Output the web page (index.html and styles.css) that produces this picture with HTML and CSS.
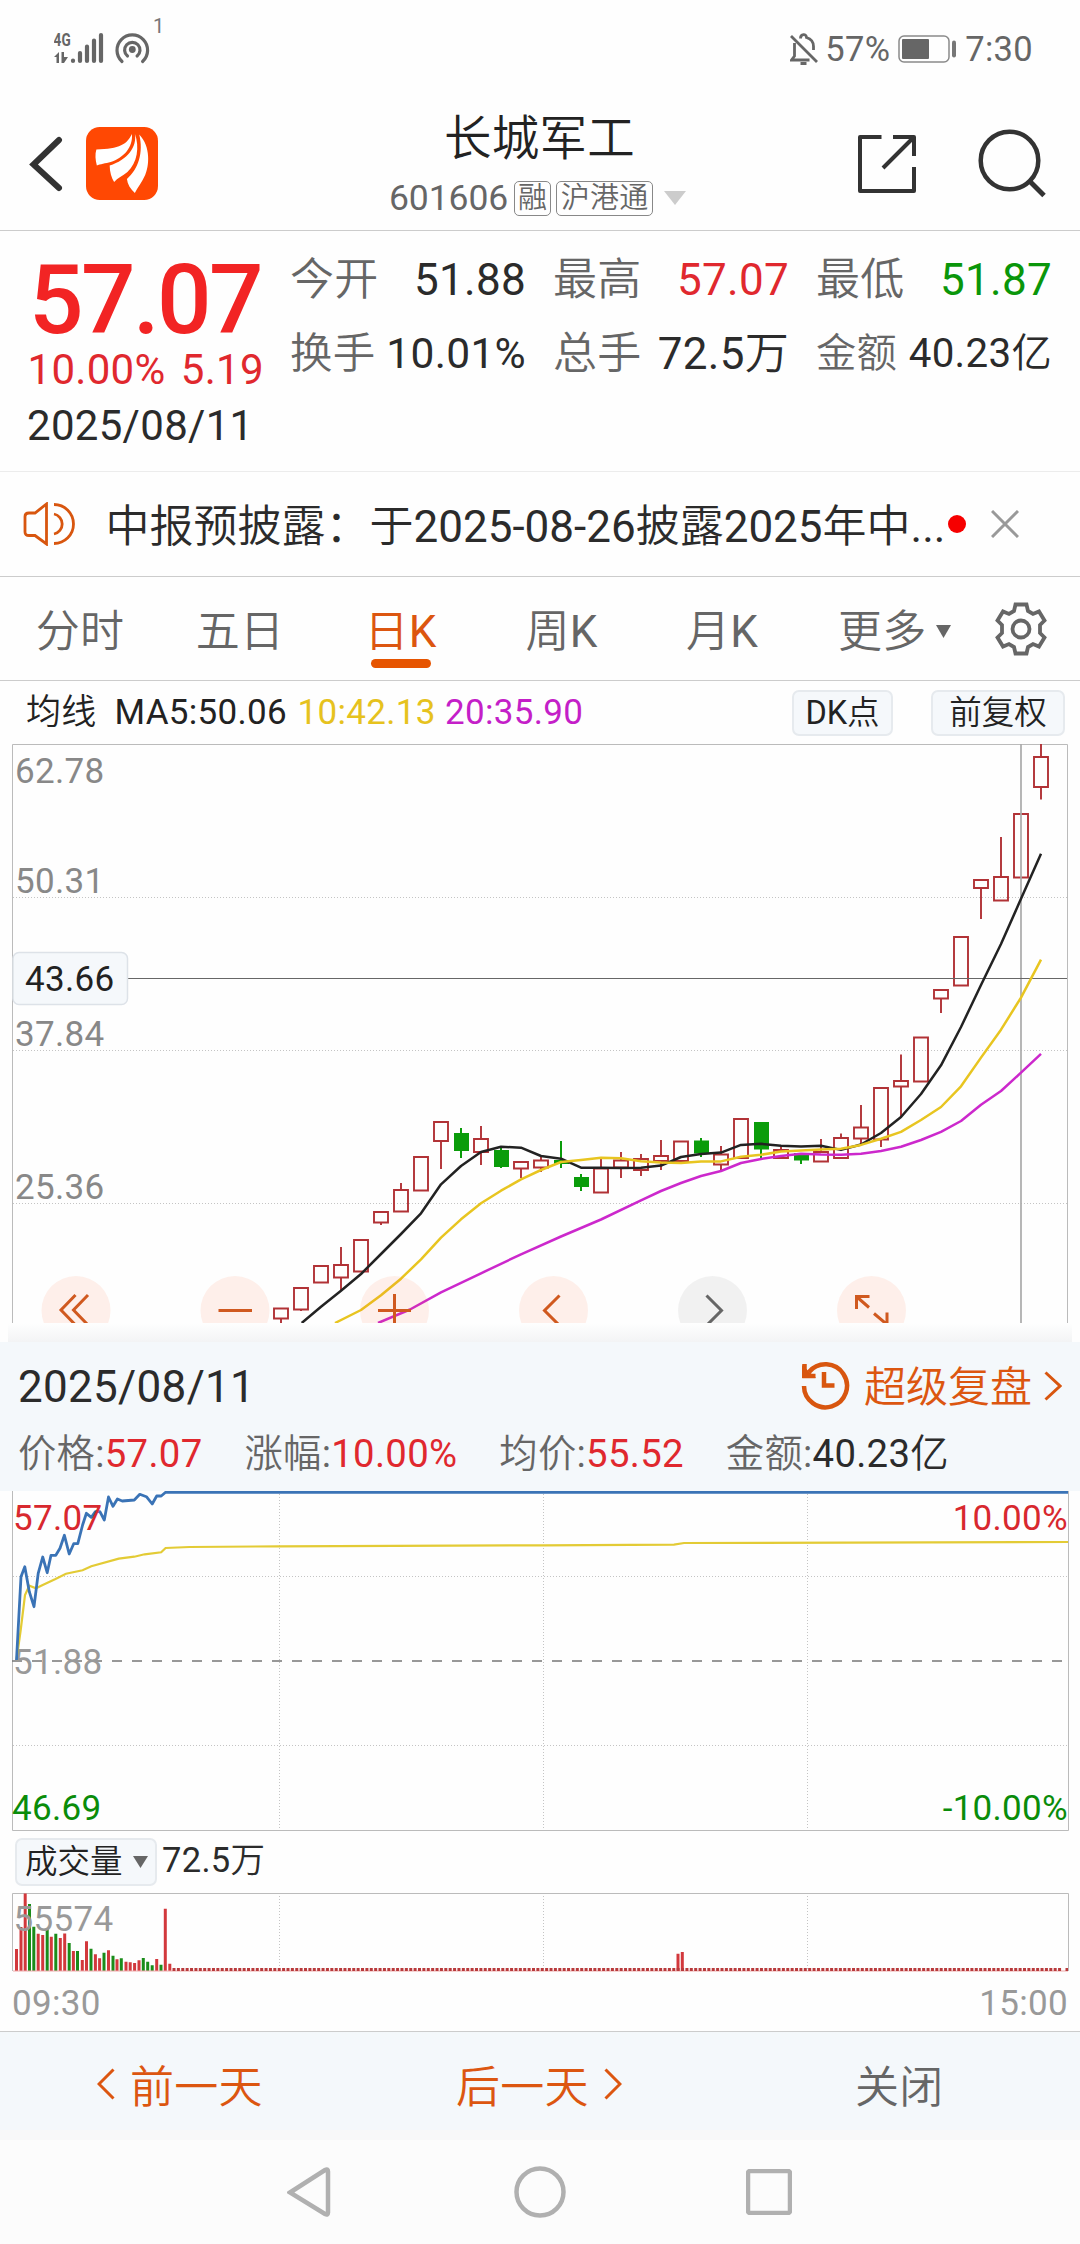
FILE: index.html
```html
<!DOCTYPE html>
<html lang="zh-CN">
<head>
<meta charset="utf-8">
<title>长城军工 601606</title>
<link rel="stylesheet" href="styles.css">
</head>
<body>
<div class="status">
  <svg class="status-signal" width="120" height="60" viewBox="54 8 120 60">
    <text class="net" x="53.5" y="46" textLength="17.5" lengthAdjust="spacingAndGlyphs">4G</text>
    <path class="sig-fill" d="M54 57l5-5v11h-2.500V57zM61.500 52h2.500v5l4 0l-4 6h-2.500z"/>
    <path class="sig-bars" d="M73 60.500v.5M80 53v8M87 46.500v14.500M94 40.500v20.500M101 35v26"/>
    <circle cx="132.300" cy="49.500" r="3.400" class="sig-fill"/>
    <path class="sig-arc" d="M127.500 56a7.700 7.700 0 1 1 9.600 0M122 61.500a15.300 15.300 0 1 1 20.600 0"/>
    <text class="hot" x="153" y="33">1</text>
  </svg>
  <div class="status-right">
    <svg class="bell" width="28" height="32" viewBox="0 0 28 32">
      <path d="M1 3L27 29M4.500 10v13l-3 4h18M10.500 5.500c0-5 6-5 6-1c5 1.500 7 4 7 9v3.500M10.500 30.500h6"/>
    </svg>
    <span class="pct">57%</span>
    <svg class="battery" width="58" height="28" viewBox="0 0 58 28">
      <rect x="1" y="1" width="50" height="26" rx="5" fill="none" stroke="#8a8a8a" stroke-width="1.500"/>
      <rect x="4" y="4" width="27" height="20" rx="1" fill="#666"/>
      <rect x="54" y="5.500" width="4" height="17" rx="2" fill="#777"/>
    </svg>
    <span class="clock">7:30</span>
  </div>
</div>

<header class="header">
  <div class="header-left">
    <svg class="back" width="34" height="56" viewBox="0 0 34 56"><path d="M30 4L4.500 28.500L30 52"/></svg>
    <svg class="logo" width="72" height="73" viewBox="0 0 73 73" preserveAspectRatio="none">
      <rect width="73" height="73" rx="14" fill="#ff4803"/>
      <path fill="#fff" d="M46.500 7C42 17 34 22 10.500 22.500C9 27 9.500 33 11 38.500C14 37 20 36.500 25 35C38 31 48 20 46.500 7z"/>
      <path fill="#fff" d="M49.500 6.500C52 20 42 33 24 38.500C24 45 26 51 28.500 55C32 51 37 49 42 45C52 36 54.500 20 49.500 6.500z"/>
      <path fill="#fff" d="M54 7.500C66 20 64 39 60 48C57 55 52 61 49.500 66C45 62 42 57 41.500 52C53 42 58.500 26 54 7.500z"/>
    </svg>
  </div>
  <div class="header-mid">
    <h1>长城军工</h1>
    <div class="code-row">
      <span class="code">601606</span><span class="badge b1">融</span><span class="badge b2">沪港通</span>
      <svg class="caret" width="22" height="14" viewBox="0 0 22 14"><path d="M0 0H22L11 14z" fill="#ccc"/></svg>
    </div>
  </div>
  <div class="header-right">
    <svg width="58" height="58" viewBox="0 0 58 58"><path fill="none" stroke="#333" stroke-width="4" stroke-linejoin="round" d="M23.500 2H2V56H56V32M35 2H56V21M55 3L25 33"/></svg>
    <svg width="70" height="70" viewBox="0 0 70 70"><circle cx="32.500" cy="31.500" r="28.800" fill="none" stroke="#333" stroke-width="4.500"/><path d="M52.500 52L67 66.500" stroke="#333" stroke-width="5"/></svg>
  </div>
</header>

<section class="quote">
  <div class="quote-main">
    <div class="price">57.07</div>
    <div class="change">10.00% 5.19</div>
    <div class="date">2025/08/11</div>
  </div>
  <dl class="stats">
    <div class="s44"><dt>今开</dt><dd>51.88</dd></div>
    <div class="s44"><dt>最高</dt><dd class="up">57.07</dd></div>
    <div class="s44"><dt>最低</dt><dd class="down">51.87</dd></div>
    <div class="s42"><dt>换手</dt><dd>10.01%</dd></div>
    <div class="s44"><dt>总手</dt><dd>72.5万</dd></div>
    <div class="s40"><dt>金额</dt><dd>40.23亿</dd></div>
  </dl>
</section>

<section class="notice">
  <svg class="speaker" width="52" height="44" viewBox="0 0 52 44"><path d="M2 14.500Q2 11 6 11H12L23.500 2V42L12 33.500H6Q2 33.500 2 30zM31 2.500A19.500 19.500 0 0 1 31 41.500M31 12A10.200 10.200 0 0 1 31 32"/></svg>
  <p>中报预披露：于2025-08-26披露2025年中...</p>
  <i class="dot"></i>
  <svg class="close" width="28" height="28" viewBox="0 0 28 28"><path d="M1 1L27 27M27 1L1 27"/></svg>
</section>

<nav class="tabs">
  <span>分时</span><span>五日</span><span class="on">日K</span><span>周K</span><span>月K</span>
  <span class="more">更多<svg width="15" height="13" viewBox="0 0 15 13"><path d="M0 0H15L7.500 13z" fill="#666"/></svg></span>
  <svg class="gear" width="52" height="54" viewBox="-26 -27 52 54">
    <path d="M-5.500 -24.500H5.500L7 -18L12 -15L18 -17.500L23.500 -8.500L19 -4V4L23.500 8.500L18 17.500L12 15L7 18L5.500 24.500H-5.500L-7 18L-12 15L-18 17.500L-23.500 8.500L-19 4V-4L-23.500 -8.500L-18 -17.500L-12 -15L-7 -18z"/><circle r="8.500"/>
  </svg>
</nav>

<div class="ma-row">
  <span class="ma-name">均线</span><span class="ma5">MA5:50.06</span><span class="ma10">10:42.13</span><span class="ma20">20:35.90</span>
  <button class="chip dk">DK点</button><button class="chip fq">前复权</button>
</div>

<svg class="kline" width="1080" height="579" viewBox="0 744 1080 579">
  <path class="dots" d="M13 897.500H1067M13 1050.500H1067M13 1203.500H1067"/>
  <path class="frame" d="M12.500 1323V744.500H1067.500V1323"/>
  <g class="axis">
    <text x="15" y="782.700">62.78</text><text x="15" y="892.700">50.31</text><text x="15" y="1045.500">37.84</text><text x="15" y="1198.500">25.36</text>
  </g>
  <!-- rising candles: hollow bodies and wicks -->
  <path class="k-up" d="M274 1308.500h14v10h-14zM281 1318.500v6M294 1288h14v21.500h-14zM301 1309v2M314 1266h14v16.500h-14zM334 1265h14v12.500h-14zM341 1247v18M341 1277.500v13M354 1240h14v31.500h-14zM374 1212h14v10.500h-14zM381 1222v3M394 1190h14v21.500h-14zM401 1183v7M414 1157h14v33.500h-14zM434 1122h14v19h-14zM441 1141v28M474 1139h14v13h-14zM481 1126v13M481 1152v13M514 1162h14v6.500h-14zM521 1168v10M534 1160.500h14v7h-14zM541 1157v3M541 1167v5M594 1168.500h14v24h-14zM601 1158.500v10M614 1160.500h14v7h-14zM621 1152v8M621 1168v10M634 1159h14v11h-14zM641 1154v5M641 1170v6M654 1156h14v5h-14zM661 1140v16M661 1161v9M674 1141.500h14v19.500h-14zM714 1154.500h14v10h-14zM721 1146v8M721 1164.500v6M734 1119h14v39h-14zM774 1150h14v8h-14zM781 1147v3M814 1152h14v9.500h-14zM821 1139v13M834 1138h14v20h-14zM841 1133.500v4M854 1127.500h14v11h-14zM861 1105v22M861 1138.500v5.500M874 1088h14v51.500h-14zM881 1139.500v7.500M894 1081h14v5.500h-14zM901 1054.500v26.500M901 1086.500v31M914 1037.500h14v44h-14zM934 990h14v8.500h-14zM941 998.500v14.500M954 937h14v48.500h-14zM974 880h14v8h-14zM981 888v31M994 877h14v23.500h-14zM1001 837v40M1014 814h14v63.500h-14zM1034 757h14v30h-14zM1041 744v13M1041 787v12.500"/>
  <!-- falling candles -->
  <path class="k-down" d="M454 1133h15v18h-15zM460 1128h2v30h-2zM494 1150h15v17h-15zM500 1148h2v20h-2zM554 1160h15v4h-15zM560 1141h2v27h-2zM574 1177h15v10h-15zM580 1174h2v17h-2zM694 1140.500h15v13h-15zM700 1138h2v19h-2zM754 1122h15v27.500h-15zM760 1149h2v9h-2zM794 1153h15v7.500h-15zM800 1160h2v4h-2z"/>
  <path class="cross-v" d="M1021 744V1323"/><path class="cross-h" d="M128 978.500H1067"/>
  <polyline class="line l20" points="378,1323 410,1309.500 441,1292.300 481,1273.300 521,1254.300 561,1236.500 601,1219.500 641,1200.400 661,1191 681,1183 701,1176 721,1171 741,1163 761,1159 781,1156 801,1153.700 821,1154.500 841,1154.800 861,1153.700 881,1151 901,1146.800 921,1140 941,1131.900 961,1121 981,1104.700 1001,1091 1021,1072.600 1041,1053.800"/>
  <polyline class="line l5" points="301.700,1323 321,1306.700 341,1290.700 361,1274 381,1254 401,1234 421,1213.300 441,1184.300 461,1166 481,1152 501,1146.700 521,1147.700 541,1156 561,1158.700 581,1167.700 601,1167.700 621,1168 641,1167.800 661,1165.600 681,1157 701,1154 721,1152.600 741,1144.900 761,1143.800 781,1145.700 801,1146.400 821,1145.700 841,1149.900 861,1144.500 881,1133 901,1117 921,1094 941,1065.300 961,1027 981,985 1001,944 1021,898.800 1041,853.700"/>
  <polyline class="line l10" points="335,1323 361,1310 381,1295.300 401,1278.700 421,1259.300 441,1237.700 461,1219.300 481,1203.300 501,1190.700 521,1179.300 541,1170 561,1162 581,1160 601,1157.700 621,1158.300 641,1161.300 661,1162.500 681,1162.900 701,1161.400 721,1161.400 741,1156.800 761,1154.800 781,1151.400 801,1150.600 821,1149.500 841,1148.700 861,1144.900 881,1138.800 901,1131.900 921,1120 941,1107 961,1086.300 981,1057.600 1001,1029.700 1021,997.600 1041,959.700"/>
  <rect class="tag" x="13" y="952.500" width="114.500" height="52" rx="6"/><text class="tag-text" x="25" y="990.700">43.66</text>
  <g class="pads"><circle cx="76" cy="1310.500" r="34.500"/><circle cx="235" cy="1310.500" r="34.500"/><circle cx="394.500" cy="1310.500" r="34.500"/><circle cx="553.500" cy="1310.500" r="34.500"/><circle class="off" cx="712.500" cy="1310.500" r="34.500"/><circle cx="871.500" cy="1310.500" r="34.500"/></g>
  <path class="pad-ico" d="M75.500 1295L61 1310L75.500 1325M88 1295L73.500 1310L88 1325M218.500 1310.500H252M378 1310.500H411M394.500 1294V1327M559.500 1295.500L544.500 1310.500L559.500 1325.500M869.500 1296.500H856.500V1309M857 1297L869 1307.500M874 1313.500L887 1324.500M887 1312.500V1325H875"/>
  <path class="pad-ico off" d="M706.500 1295.500L721.500 1310.500L706.500 1325.500"/>
</svg>
<div class="fade"></div>

<section class="day">
  <div class="day-head">
    <span class="day-date">2025/08/11</span>
    <a class="replay">
      <svg width="50" height="50" viewBox="0 0 50 50"><path fill="none" stroke="#d8560f" stroke-width="4.500" d="M4 25A21.500 21.500 0 1 0 9 11M4.500 3V15H15.500M24 11V24.500H34.500"/><path fill="#d8560f" d="M2 4V17H16z"/></svg>
      <span>超级复盘</span>
      <svg width="18" height="30" viewBox="0 0 18 30"><path fill="none" stroke="#d8560f" stroke-width="3" d="M1.500 1.500L16 15L1.500 28.500"/></svg>
    </a>
  </div>
  <div class="day-info">
    <span>价格:<b class="up">57.07</b></span><span>涨幅:<b class="up">10.00%</b></span><span>均价:<b class="up">55.52</b></span><span>金额:<b>40.23亿</b></span>
  </div>
</section>

<svg class="minute" width="1080" height="340" viewBox="0 1491 1080 340">
  <path class="dots" d="M13 1576.500H1067M13 1745.500H1067M279.500 1491V1830M543.500 1491V1830M807.500 1491V1830"/>
  <path class="frame" d="M12.500 1491V1830.500H1068.500V1491"/>
  <path class="mid" d="M12 1661H1067"/>
  <g class="axis">
    <text x="13" y="1674.300" class="dim">51.88</text>
    <text x="12" y="1819.700" class="g">46.69</text><text x="1068" y="1819.700" class="g end">-10.00%</text>
  </g>
  <polyline class="avg" points="16.500,1660 20.700,1630 25,1595 29.300,1585.700 36,1588.300 42.700,1585 55,1579.300 66,1573.700 82.600,1570.300 91.300,1566.300 118.800,1558.700 134.300,1556.700 144.600,1554.300 161.200,1552.300 165.600,1548 189.400,1547 279,1546.300 543,1545.300 674,1544.700 684,1543 1068,1542"/>
  <polyline class="now" points="16.500,1660 21,1576.700 24.800,1566.700 29.300,1591.700 34,1606.700 38.200,1573.300 42.700,1557 47.200,1572.700 51,1555.300 55.800,1555.300 60,1548.300 64.400,1535.300 69.200,1554 73.700,1543.700 77.800,1543.700 82.600,1525 86.400,1513.300 91.300,1517.300 95.400,1511.700 99.900,1511.700 104.300,1520 108.500,1497 113,1506.300 117.400,1499 122.200,1501 134.300,1500 139.800,1494.300 146.400,1496.700 152.200,1504 156.700,1496 161.200,1496 165.600,1492.300 1068,1492.300"/>
  <g class="axis"><text x="13" y="1529.700" class="r">57.07</text><text x="1068" y="1529.700" class="r end">10.00%</text></g>
</svg>

<div class="vol-row">
  <button class="chip vol">成交量<svg width="15" height="12" viewBox="0 0 15 12"><path d="M0 0H15L7.500 12z" fill="#666"/></svg></button>
  <span>72.5万</span>
</div>

<svg class="volume" width="1080" height="79" viewBox="0 1893 1080 79">
  <path class="dots" d="M279.500 1893V1971M543.500 1893V1971M807.500 1893V1971"/>
  <path class="frame" d="M12.500 1971V1893.500H1068.500V1971"/>
  <path class="v-up" d="M16.500 1971V1949M21 1971V1927M25.200 1971V1893.500M38.200 1971V1933.700M42.700 1971V1935M51.300 1971V1936.700M60.300 1971V1938M64.700 1971V1933.500M73.400 1971V1951M82.300 1971V1960M86.500 1971V1941.300M95.400 1971V1954.300M99.600 1971V1958.300M108.500 1971V1950.300M117 1971V1959.300M126 1971V1961.700M130.200 1971V1962.300M134.600 1971V1963M139 1971V1960.300M156.700 1971V1959M165.300 1971V1908.700M169.800 1971V1963.700M678 1971V1953.700M682.300 1971V1952"/>
  <path class="v-down" d="M29.500 1971V1904M33.800 1971V1926.700M47.200 1971V1929M55.800 1971V1933.700M69.200 1971V1943M77.500 1971V1951M91 1971V1948.700M104 1971V1952.700M113 1971V1955.700M121.300 1971V1958.300M143.300 1971V1958M147.700 1971V1961.700M152.200 1971V1965.300M161 1971V1964.700"/>
  <path class="v-base" d="M13 1971H1068"/>
  <path class="v-flat" d="M172.500 1969.500H1062"/><path class="v-flat" d="M1065.500 1969.500H1068"/>
  <text x="13.500" y="1930.700" class="vol-max">55574</text>
</svg>
<div class="time-row"><span>09:30</span><span>15:00</span></div>

<div class="actions">
  <a class="a1"><svg width="18" height="32" viewBox="0 0 18 32"><path d="M16.500 1.500L2 16L16.500 30.500"/></svg>前一天</a>
  <a class="a2">后一天<svg width="18" height="32" viewBox="0 0 18 32"><path d="M1.500 1.500L16 16L1.500 30.500"/></svg></a>
  <a class="a3">关闭</a>
</div>
<div class="sysnav">
  <svg width="44" height="52" viewBox="0 0 44 52"><path d="M3 26.500L38 4Q41 2.500 41 5.500V46.500Q41 49.500 38 48z"/></svg>
  <svg width="52" height="52" viewBox="0 0 52 52"><circle cx="26" cy="26" r="23.500"/></svg>
  <svg width="46" height="46" viewBox="0 0 46 46"><rect x="2" y="2" width="42" height="42" rx="2"/></svg>
</div>
</body>
</html>
```
FILE: styles.css
```css
* { box-sizing: border-box; }
body { margin: 0; width: 1080px; height: 2244px; overflow: hidden; background: #fefefe; color: #2b2b2b; font-family: Roboto, "Noto Sans CJK SC DemiLight", "Noto Sans CJK SC Light", "Noto Sans CJK SC", sans-serif; font-weight: 400; letter-spacing: .3px; }
svg { display: block; flex: none; }
h1, p, dl, dd, dt { margin: 0; font-weight: 400; }
button { font-family: inherit; margin: 0; padding: 0; }
b { font-weight: 400; color: #2b2b2b; }
.up, b.up { color: #e0282e; }
.down { color: #0a960a; }

.status { height: 98px; display: flex; justify-content: space-between; padding: 0 47px 0 54px; color: #666; }
.status-signal { margin-top: 8px; }
.net { font: 700 17.500px Roboto, sans-serif; fill: #666; }
.hot { font: 400 20px Roboto, sans-serif; fill: #777; }
.sig-fill { fill: #666; }
.sig-bars { stroke: #666; stroke-width: 4.200; stroke-linecap: round; }
.sig-arc { fill: none; stroke: #666; stroke-width: 3.200; stroke-linecap: round; }
.status-right { display: flex; align-items: center; font-size: 34.500px; line-height: 40px; }
.bell path { fill: none; stroke: #666; stroke-width: 2.800; }
.pct { margin-left: 7px; }
.battery { margin-left: 8px; }
.clock { margin-left: 9px; }

.header { height: 133px; border-bottom: 1px solid #ccc; display: grid; grid-template-columns: 389px 298px 1fr; }
.header-left { display: flex; align-items: center; height: 131px; padding-left: 29px; gap: 22.500px; }
.back path { fill: none; stroke: #333; stroke-width: 6; stroke-linecap: round; }
.header-mid { padding-top: 13px; }
h1 { font-size: 47.500px; line-height: 56px; text-align: center; color: #222; padding-left: 3px; }
.code-row { display: flex; align-items: center; height: 36px; margin-top: 13px; color: #666; }
.code { font-size: 35.500px; line-height: 36px; letter-spacing: -.1px; }
.badge { height: 35px; border: 1px solid #888; border-radius: 5px; font-size: 29px; line-height: 33px; text-align: center; }
.b1 { width: 37px; margin-left: 6px; }
.b2 { width: 97px; margin-left: 5px; }
.caret { margin-left: 11px; }
.header-right { display: flex; align-items: center; height: 131px; padding-left: 171px; gap: 61px; }

.quote { height: 241px; border-bottom: 1px solid #ececec; display: grid; grid-template-columns: 290px 764px; }
.quote-main { padding: 29px 0 0 27px; }
.price { font-size: 96px; line-height: 80px; font-weight: 500; color: #f22424; letter-spacing: -2.600px; padding-left: 2px; }
.change { font-size: 42px; line-height: 44px; margin-top: 7.500px; color: #e0282e; word-spacing: 4.500px; padding-left: .500px; }
.date { font-size: 42px; line-height: 44px; margin-top: 12px; color: #2b2b2b; }
.stats { display: grid; grid-template-columns: repeat(3, 236px); column-gap: 27px; grid-auto-rows: 73.500px; padding-top: 19px; line-height: 60px; }
.stats div { display: flex; justify-content: space-between; align-items: baseline; white-space: nowrap; }
.stats dt { color: #666; }
.s44 { font-size: 44px; }
.s42 { font-size: 42.500px; }
.s40 { font-size: 40.300px; }

.notice { height: 105px; border-bottom: 1px solid #ccc; display: flex; align-items: center; padding-left: 22.500px; }
.speaker path { fill: none; stroke: #d8560f; stroke-width: 2.800; }
.notice p { width: 838px; margin-left: 31px; padding-top: 5px; font-size: 44px; line-height: 60px; white-space: nowrap; letter-spacing: 0; }
.dot { width: 18px; height: 18px; border-radius: 9px; background: #f60000; margin-left: 4.500px; }
.close { margin-left: 25px; }
.close path { stroke: #999; stroke-width: 3; }

.tabs { height: 104px; border-bottom: 1px solid #ccc; display: grid; grid-template-columns: 160px 160px 161px 161px 160px 193px 52px; align-items: center; font-size: 44px; line-height: 60px; color: #666; padding-top: 6px; }
.tabs span { text-align: center; }
.tabs .on { color: #dc5610; position: relative; }
.tabs .on::after { content: ""; position: absolute; left: 51px; top: 57px; width: 60px; height: 9px; border-radius: 5px; background: #e65400; }
.tabs .more { display: flex; align-items: center; gap: 9px; padding-left: 36px; }
.gear { margin-top: -6px; }
.gear path, .gear circle { fill: none; stroke: #666; stroke-width: 3.800; }

.ma-row { height: 63px; display: flex; align-items: center; padding-left: 26px; font-size: 35px; line-height: 46px; white-space: nowrap; color: #222; }
.ma-row span { padding-top: 1px; }
.ma-name { width: 88.500px; }
.ma5 { width: 183px; }
.ma10 { width: 147.500px; color: #e6c21e; }
.ma20 { width: 347px; color: #c41fc8; }
.chip { height: 46px; border: 2px solid #e6eaee; border-radius: 7px; background: #f5f8fb; color: #222; font-size: 32.500px; line-height: 42px; }
.dk { width: 101px; }
.fq { width: 134px; margin-left: 38px; }

.dots { fill: none; stroke: #c4c4c4; stroke-width: 1; stroke-dasharray: 1 2; }
.frame { fill: none; stroke: #bbb; stroke-width: 1; }
.axis text, .vol-max { font-size: 35px; fill: #888; }
.axis .dim { fill: #999; }
.axis .g { fill: #0a8c0a; }
.axis .r { fill: #d8282e; }
.end { text-anchor: end; }
.k-up { fill: none; stroke: #b13236; stroke-width: 1.900; }
.k-down { fill: #0a9c0a; }
.cross-v { stroke: #aaa; stroke-width: 1.700; }
.cross-h { stroke: #666; stroke-width: 1.200; }
.line { fill: none; stroke-width: 2.500; stroke-linejoin: round; }
.l5 { stroke: #222; }
.l10 { stroke: #e8c520; }
.l20 { stroke: #cc28cc; }
.tag { fill: #f5f8fb; stroke: #dde2e8; stroke-width: 1.500; }
.tag-text { font-size: 35px; fill: #222; }
.pads circle { fill: #ff5a1e; fill-opacity: .09; }
.pads .off { fill: #000; fill-opacity: .05; }
.pad-ico { fill: none; stroke: #d0591f; stroke-width: 3; }
.pad-ico.off { stroke: #666; }

.fade { height: 19px; margin: 0 8px; background: linear-gradient(#fefefe, #f3f4f5); }
.day { height: 149px; background: #f4f8fb; }
.day-head { display: flex; justify-content: space-between; align-items: center; height: 88px; padding: 0 18px 0 18px; }
.day-date { font-size: 44px; line-height: 60px; padding-top: 2px; }
.replay { display: flex; align-items: center; color: #dc5610; font-size: 42px; line-height: 60px; letter-spacing: 0; }
.replay span { margin: 0 12px 0 14px; padding-top: 3px; }
.day-info { display: flex; gap: 42px; padding-left: 18px; font-size: 38.300px; line-height: 48px; color: #666; white-space: nowrap; }
.mid { stroke: #777; stroke-width: 1.500; stroke-dasharray: 10 10; }
.avg { fill: none; stroke: #e3cb35; stroke-width: 2.200; }
.now { fill: none; stroke: #3a73b6; stroke-width: 2.800; stroke-linejoin: round; }

.vol-row { height: 62px; display: flex; align-items: center; padding-left: 15px; font-size: 34.500px; line-height: 48px; }
.vol { width: 142px; height: 48px; display: flex; align-items: center; padding-left: 8px; gap: 10px; }
.vol-row span { margin-left: 5px; margin-top: -5px; }
.v-up, .v-down { fill: none; stroke-width: 3; }
.v-up { stroke: #d2383c; }
.v-down { stroke: #1a8c1a; }
.v-base { stroke: #eaa; stroke-width: 1; }
.v-flat { stroke: #b83a3c; stroke-width: 3; stroke-dasharray: 3 1.384; }
.vol-max { fill: #999; }
.time-row { height: 59px; display: flex; justify-content: space-between; padding: 9.500px 12px 0 12px; font-size: 35px; line-height: 44px; color: #999; }

.actions { height: 109px; border-top: 1px solid #ccc; border-bottom: 10px solid #f8f8f9; background: #f4f8fb; display: grid; grid-template-columns: 360px 360px 1fr; align-items: center; font-size: 44px; line-height: 60px; color: #dc5610; padding-top: 14px; }
.actions a { display: flex; align-items: center; gap: 15px; }
.actions svg { margin-top: -9px; }
.actions path { fill: none; stroke: #dc5610; stroke-width: 3; }
.a1 { padding-left: 97px; }
.a2 { padding-left: 96px; }
.actions .a3 { padding-left: 135px; color: #666; }
.sysnav { height: 104px; background: #fcfcfc; display: flex; align-items: center; padding-left: 287px; }
.sysnav svg { fill: none; stroke: #b0b0b0; stroke-width: 4.500; }
.sysnav svg + svg { margin-left: 183px; }
.sysnav svg + svg + svg { margin-left: 180px; }
```
